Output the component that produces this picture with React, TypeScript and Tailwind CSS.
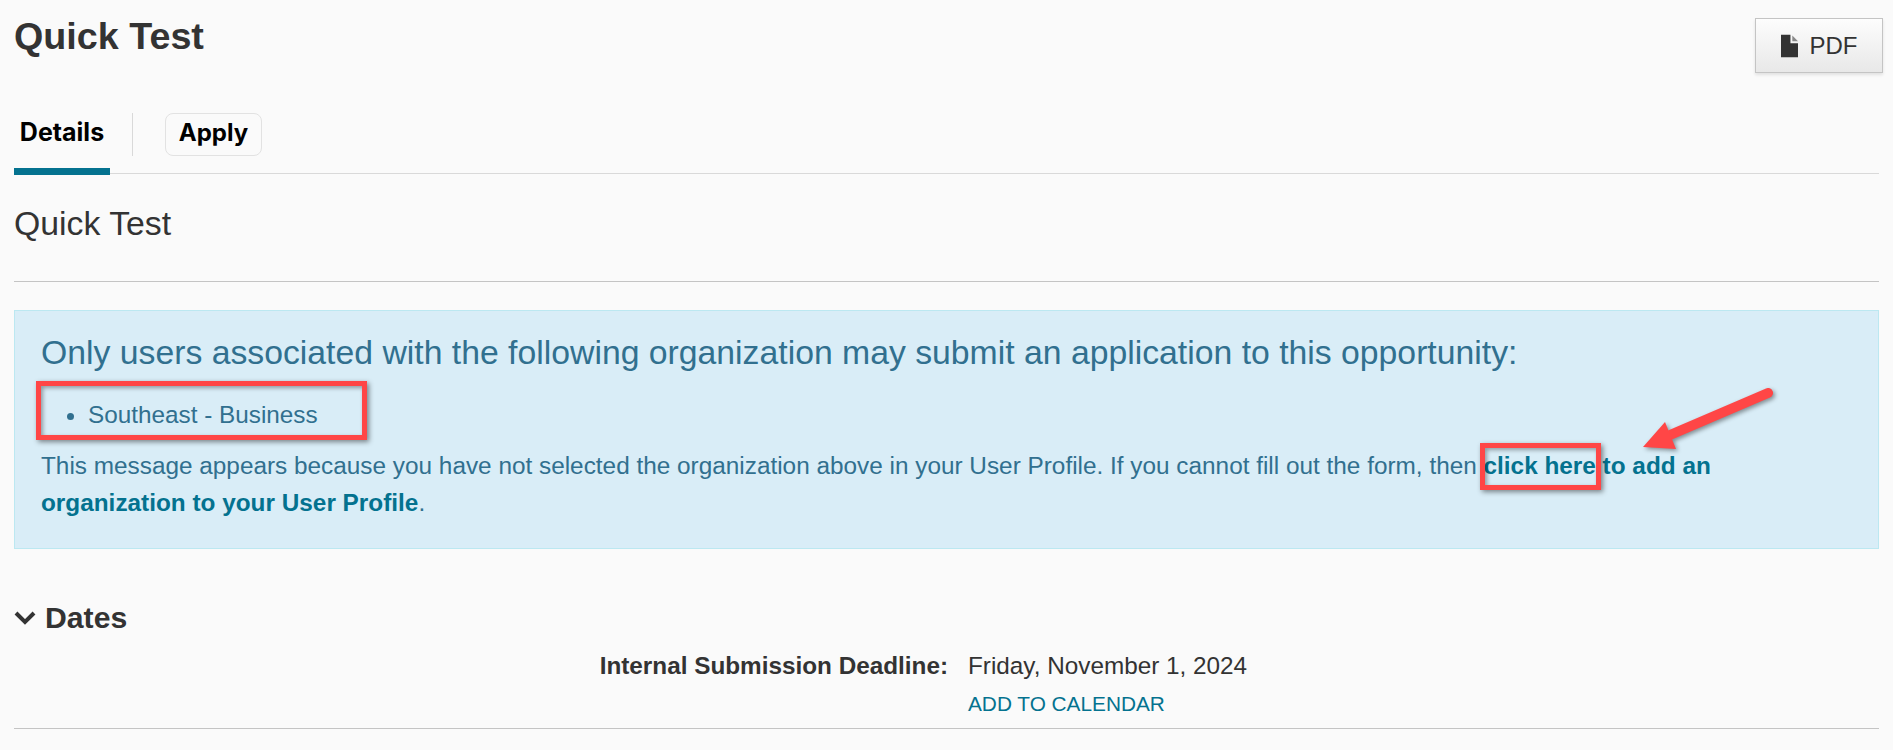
import React from "react";

const App: React.FC = () => {
  return (
    <div className="h-[750px] overflow-hidden bg-[#fafafa] px-[14px] font-['Liberation_Sans',Arial,sans-serif] text-[#333]">
      <div className="flex items-start justify-between pt-[12px]">
        <h1 className="text-[37.7px] leading-[48px] font-bold">Quick Test</h1>
        <button className="mt-[6px] mr-[-4px] flex h-[55px] w-[128px] items-center justify-center gap-[12px] border border-[#c4c4c4] bg-gradient-to-b from-[#fdfdfd] to-[#e8e8e8] text-[24px] shadow-[0_2px_3px_rgba(0,0,0,0.1)]">
          <svg width="17" height="24" viewBox="0 0 18 24" fill="#333">
            <path d="M0 0h10v9h8v15H0z" />
            <path d="M12 1l6 6h-6z" fill="#888" />
          </svg>
          PDF
        </button>
      </div>

      <div className="mt-[40px] flex h-[61px] items-start border-b border-[#d9d9d9] font-['Inter',sans-serif] text-[#000]">
        <div className="flex h-[62px] w-[96px] justify-center border-b-[7px] border-[#04728f] pt-[2px] text-[25px] leading-[34px] font-bold">
          Details
        </div>
        <div className="mt-0 ml-[22px] h-[43px] w-px bg-[#d9d9d9]" />
        <div className="ml-[32px] flex h-[43px] w-[97px] items-center justify-center rounded-[8px] border border-[#e2e2e2] pb-[3px] text-[24px] font-bold">
          Apply
        </div>
      </div>

      <h2 className="mt-[30px] text-[33.8px] leading-[39px]">Quick Test</h2>
      <hr className="mt-[38px] border-[#c4c4c4]" />

      <div className="mt-[28px] h-[239px] border border-[#bce8f1] bg-[#d9edf7] px-[26px] pt-[19px] text-[#31708f]">
        <h3 className="text-[33.75px] leading-[44px]">
          Only users associated with the following organization may submit an application to this opportunity:
        </h3>
        <div className="relative mt-[23px] w-fit">
          <ul className="list-disc pl-[47px] text-[24.3px] leading-[36px]">
            <li>Southeast - Business</li>
          </ul>
        </div>
        <p className="relative mt-[14px] text-[24.35px] leading-[37px]">
          This message appears because you have not selected the organization above in your User Profile. If you cannot fill out the form, then{" "}
          <a className="font-bold text-[#04728f]">click here to add an organization to your User Profile</a>.
        </p>
      </div>

      <div className="mt-[51px] flex items-center gap-[9px] text-[30.2px] leading-[36px] font-bold">
        <svg width="22" height="14" viewBox="0 0 22 14" fill="none" stroke="#333" strokeWidth="4">
          <path d="M2 2l9 9 9-9" />
        </svg>
        Dates
      </div>
      <div className="mt-[15px] flex text-[24.3px] leading-[30px]">
        <div className="w-[934px] text-right font-bold">Internal Submission Deadline:</div>
        <div className="ml-[20px]">
          <div>Friday, November 1, 2024</div>
          <a className="mt-[10px] block text-[20.8px] leading-[26px] text-[#04728f]">ADD TO CALENDAR</a>
        </div>
      </div>
      <hr className="mt-[11px] border-[#c4c4c4]" />

      {/* annotations drawn on top of the screenshot */}
      <div className="absolute top-[381px] left-[36px] h-[59px] w-[331px] border-[5px] border-[#ff4646] shadow-[2px_2px_5px_rgba(0,0,0,0.45),inset_2px_2px_4px_rgba(0,0,0,0.35)]" />
      <div className="absolute top-[443px] left-[1480px] h-[47px] w-[121px] border-[5px] border-[#ff4646] shadow-[2px_2px_5px_rgba(0,0,0,0.45),inset_2px_2px_4px_rgba(0,0,0,0.35)]" />
      <svg className="absolute top-[385px] left-[1640px] drop-shadow-[2px_2px_2px_rgba(0,0,0,0.4)]" width="140" height="75" viewBox="0 0 140 75">
        <path d="M128 8 L30 50" stroke="#ff4646" strokeWidth="10" strokeLinecap="round" />
        <path d="M3 62 L25 37 L36 64 Z" fill="#ff4646" />
      </svg>
    </div>
  );
};

export default App;
